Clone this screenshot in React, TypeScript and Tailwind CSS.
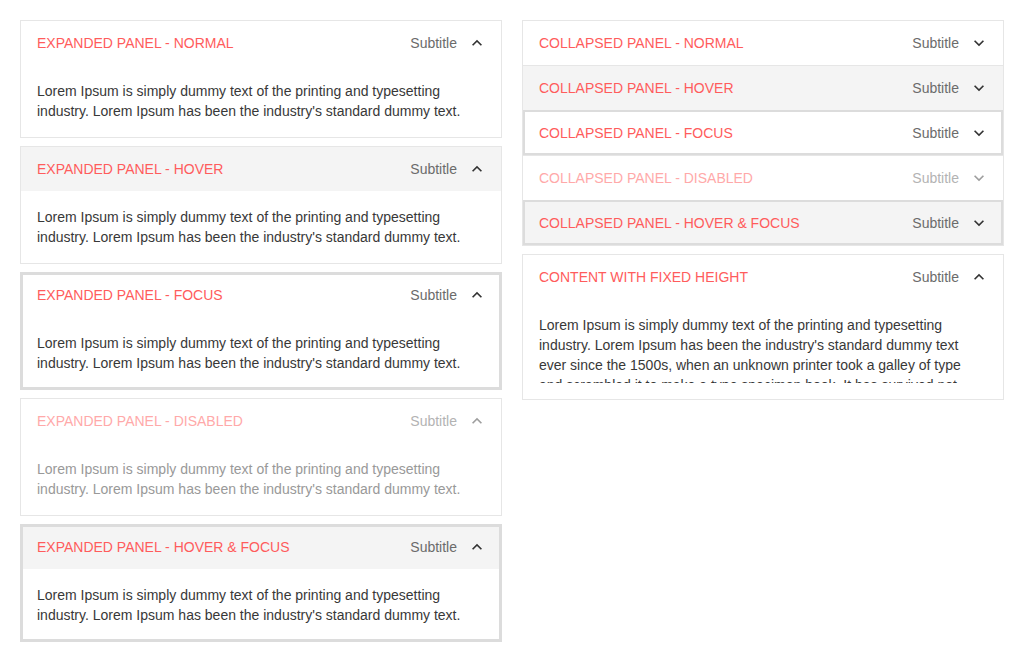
import type { ReactNode } from "react";

type PanelState = "normal" | "hover" | "focus" | "disabled" | "hoverfocus";

const SHORT =
  "Lorem Ipsum is simply dummy text of the printing and typesetting industry. Lorem Ipsum has been the industry's standard dummy text.";
const LONG =
  "Lorem Ipsum is simply dummy text of the printing and typesetting industry. Lorem Ipsum has been the industry's standard dummy text ever since the 1500s, when an unknown printer took a galley of type and scrambled it to make a type specimen book. It has survived not only five centuries, but also the leap into electronic typesetting, remaining essentially unchanged.";

function Chevron({ up, disabled }: { up: boolean; disabled?: boolean }) {
  return (
    <svg
      viewBox="0 0 24 24"
      className={`h-5 w-5 ${disabled ? "text-[#9e9e9e]" : "text-[#333333]"}`}
      fill="currentColor"
    >
      {up ? (
        <path d="M12 8l-6 6 1.41 1.41L12 10.83l4.59 4.58L18 14z" />
      ) : (
        <path d="M16.59 8.59L12 13.17 7.41 8.59 6 10l6 6 6-6z" />
      )}
    </svg>
  );
}

function Header({ title, state, up }: { title: string; state: PanelState; up: boolean }) {
  const hover = state === "hover" || state === "hoverfocus";
  const disabled = state === "disabled";
  return (
    <div className={`flex h-[44px] items-center pr-[14px] pl-4 ${hover ? "bg-[#f4f4f4]" : ""}`}>
      <span className={`flex-1 text-[14px] ${disabled ? "text-[#ffa9a9]" : "text-[#ff5c5c]"}`}>{title}</span>
      <span className={`mr-[10px] text-[14px] ${disabled ? "text-[#b3b3b3]" : "text-[#6b6b6b]"}`}>Subtitle</span>
      <Chevron up={up} disabled={disabled} />
    </div>
  );
}

function ExpandedPanel({ title, state, children }: { title: string; state: PanelState; children: ReactNode }) {
  const focus = state === "focus" || state === "hoverfocus";
  return (
    <div
      className={`border bg-white ${
        focus ? "border-[#dcdcdc] outline-2 outline-[#dcdcdc] outline-offset-[-3px]" : "border-[#e6e6e6]"
      }`}
    >
      <Header title={title} state={state} up />
      {children}
    </div>
  );
}

function Body({ disabled, children }: { disabled?: boolean; children: ReactNode }) {
  return (
    <p className={`px-4 py-4 text-[14px] leading-5 ${disabled ? "text-[#999999]" : "text-[#383838]"}`}>{children}</p>
  );
}

function CollapsedItem({ title, state, first }: { title: string; state: PanelState; first?: boolean }) {
  const focus = state === "focus" || state === "hoverfocus";
  return (
    <div
      className={`${first ? "" : "border-t border-[#e6e6e6]"} ${
        focus ? "outline-2 outline-[#dcdcdc] outline-offset-[-2px]" : ""
      }`}
    >
      <Header title={title} state={state} up={false} />
    </div>
  );
}

export default function App() {
  return (
    <div className="flex min-h-screen gap-5 bg-white p-5 font-['Liberation_Sans',Arial,sans-serif]">
      <div className="flex w-[482px] flex-col gap-2">
        <ExpandedPanel title="EXPANDED PANEL - NORMAL" state="normal">
          <Body>{SHORT}</Body>
        </ExpandedPanel>
        <ExpandedPanel title="EXPANDED PANEL - HOVER" state="hover">
          <Body>{SHORT}</Body>
        </ExpandedPanel>
        <ExpandedPanel title="EXPANDED PANEL - FOCUS" state="focus">
          <Body>{SHORT}</Body>
        </ExpandedPanel>
        <ExpandedPanel title="EXPANDED PANEL - DISABLED" state="disabled">
          <Body disabled>{SHORT}</Body>
        </ExpandedPanel>
        <ExpandedPanel title="EXPANDED PANEL - HOVER & FOCUS" state="hoverfocus">
          <Body>{SHORT}</Body>
        </ExpandedPanel>
      </div>

      <div className="flex w-[482px] flex-col gap-2 self-start">
        <div className="border border-[#e6e6e6] bg-white">
          <CollapsedItem title="COLLAPSED PANEL - NORMAL" state="normal" first />
          <CollapsedItem title="COLLAPSED PANEL - HOVER" state="hover" />
          <CollapsedItem title="COLLAPSED PANEL - FOCUS" state="focus" />
          <CollapsedItem title="COLLAPSED PANEL - DISABLED" state="disabled" />
          <CollapsedItem title="COLLAPSED PANEL - HOVER & FOCUS" state="hoverfocus" />
        </div>
        <ExpandedPanel title="CONTENT WITH FIXED HEIGHT" state="normal">
          <div className="py-4 pr-6 pl-4">
            <div className="h-[68px] overflow-hidden text-[14px] leading-5 text-[#383838]">{LONG}</div>
          </div>
        </ExpandedPanel>
      </div>
    </div>
  );
}
